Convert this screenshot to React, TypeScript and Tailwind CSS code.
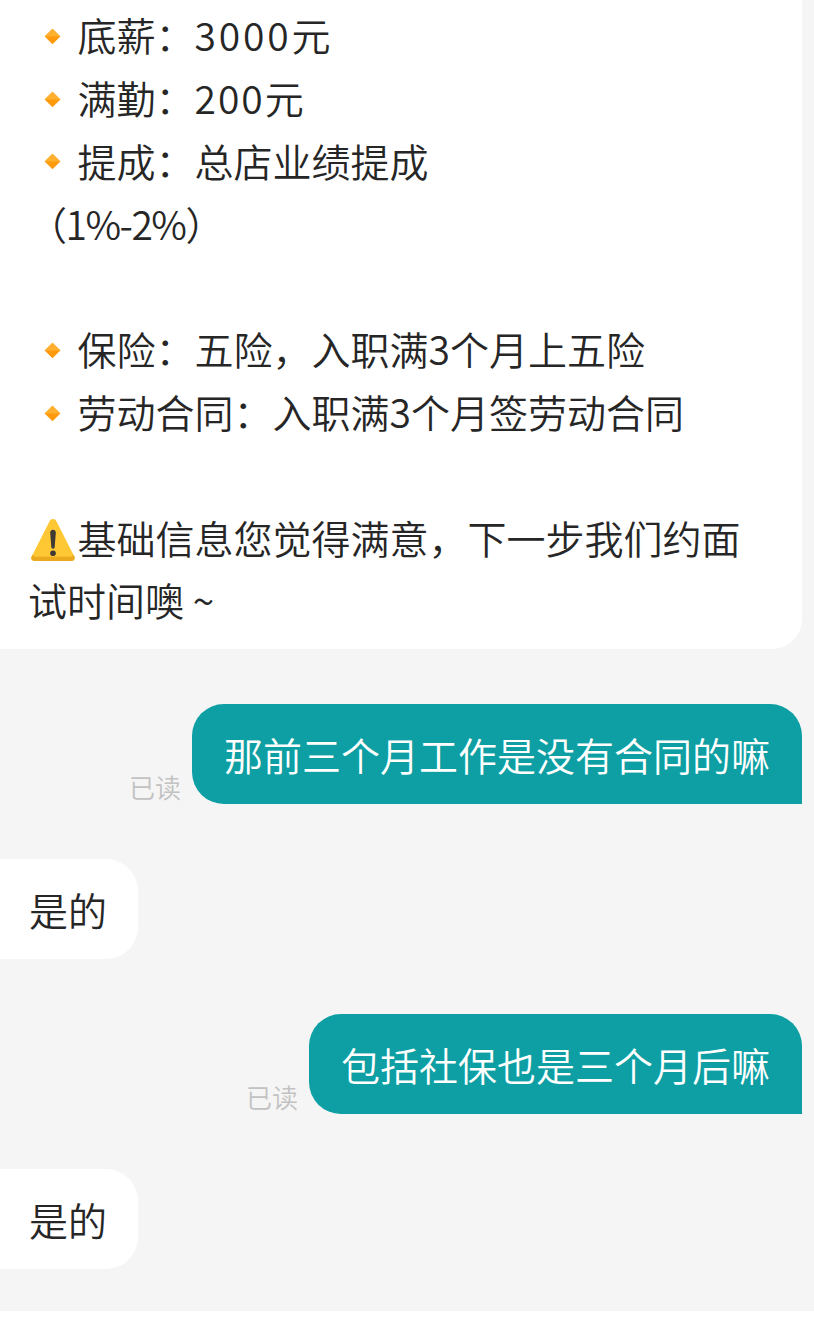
const FONT = "font-['Noto_Sans_CJK_SC','Noto_Sans',sans-serif]";

function Diamond() {
  return (
    <svg viewBox="0 0 16 16" className="mr-[17px] ml-[13.500px] h-[17px] w-[17px] shrink-0 translate-y-[2px]">
      <path d="M8 .6 15.4 8 8 15.4.6 8z" fill="#ff9a0d" />
      <path d="M8 .6 15.4 8H.6z" fill="#ffb02e" />
    </svg>
  );
}

function Warning() {
  return (
    <svg viewBox="0 0 44 44" className="mr-[2px] -ml-[0.500px] h-[46px] w-[46px] shrink-0 translate-y-[3.500px]">
      <path d="M22 1.500c1.500 0 2.600.8 3.400 2.300l17 33.500c1 2.200-.2 4.200-2.600 4.200H4.200c-2.400 0-3.600-2-2.600-4.200l17-33.500C19.400 2.300 20.500 1.500 22 1.500z" fill="#fdc834" />
      <path d="M1.600 37.300c-1 2.200.2 4.200 2.600 4.200h35.600c2.400 0 3.600-2 2.600-4.200l-1-2c-.5 1.500-1.500 2.200-3 2.200H5.600c-1.500 0-2.500-.7-3-2.200z" fill="#eba91f" />
      <path d="M19.300 14.500c0-1.700 1.200-2.800 2.700-2.800s2.700 1.100 2.700 2.800l-1.100 13.800c-.1 1-.7 1.600-1.600 1.600s-1.500-.6-1.600-1.600z" fill="#3f3a34" />
      <circle cx="22" cy="34.200" r="2.700" fill="#3f3a34" />
    </svg>
  );
}

function Line({ children }: { children?: React.ReactNode }) {
  return <div className="flex h-[62.8px] items-center whitespace-pre">{children}</div>;
}

function Sent({ text }: { text: string }) {
  return (
    <div className="flex items-end justify-end gap-[11px] pr-3">
      <span className="mb-[1px] text-[26px] leading-[33px] text-[#c2c2c2]">已读</span>
      <div className="flex h-[100px] items-center rounded-l-[32px] rounded-tr-[32px] bg-[#0d9fa3] pr-[32px] pl-[32px] text-white">
        {text}
      </div>
    </div>
  );
}

function Received({ text }: { text: string }) {
  return (
    <div className="flex h-[100px] w-fit items-center rounded-r-[32px] bg-white pr-[31px] pl-[29px]">{text}</div>
  );
}

export default function App() {
  return (
    <div className={`${FONT} flex h-[1333px] w-[814px] flex-col overflow-hidden bg-[#f5f5f5] text-[39px] font-[350] text-[#262626]`}>
      <div className="flex flex-1 flex-col gap-[55px]">
        <div className="mr-3 rounded-br-[30px] bg-white pt-[3px] pb-[18px] pl-[30px]">
          <Line><Diamond />底薪：<span className="tracking-[2.800px]">3000</span>元</Line>
          <Line><Diamond />满勤：<span className="tracking-[2px]">200</span>元</Line>
          <Line><Diamond />提成：总店业绩提成</Line>
          <Line><span className="-ml-[2px] tracking-[-1.500px]">（1%-2%）</span></Line>
          <Line />
          <Line><Diamond />保险：五险，入职满3个月上五险</Line>
          <Line><Diamond />劳动合同：入职满3个月签劳动合同</Line>
          <Line />
          <Line><Warning />基础信息您觉得满意，下一步我们约面</Line>
          <Line><span className="-ml-[2px]">试时间噢 ~</span></Line>
        </div>
        <Sent text="那前三个月工作是没有合同的嘛" />
        <Received text="是的" />
        <Sent text="包括社保也是三个月后嘛" />
        <Received text="是的" />
      </div>
      <div className="h-[22px] bg-white" />
    </div>
  );
}
